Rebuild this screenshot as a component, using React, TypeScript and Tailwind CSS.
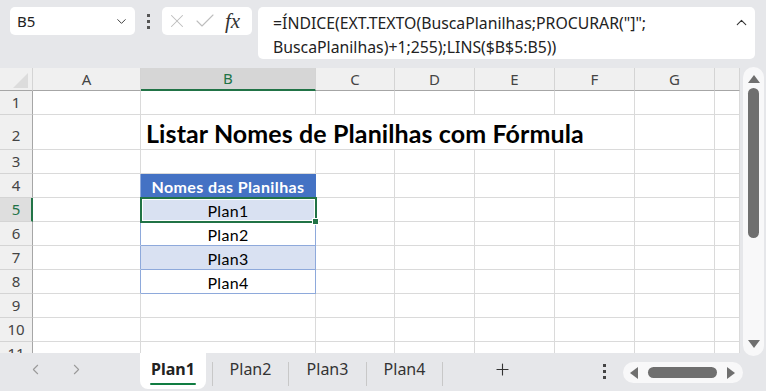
import React from 'react';
import { ChevronDown, ChevronUp, ChevronLeft, ChevronRight, Plus, X, Check } from 'lucide-react';

const cols = [
  { key: 'A', w: 'w-[108px]' },
  { key: 'B', w: 'w-[175px]' },
  { key: 'C', w: 'w-[79px]' },
  { key: 'D', w: 'w-[80px]' },
  { key: 'E', w: 'w-[80px]' },
  { key: 'F', w: 'w-[80px]' },
  { key: 'G', w: 'w-[80px]' },
  { key: '', w: 'w-[25px]' },
];

const rows = [1, 2, 3, 4, 5, 6, 7, 8, 9, 10, 11];

const sheetNames: Record<number, string> = { 5: 'Plan1', 6: 'Plan2', 7: 'Plan3', 8: 'Plan4' };

function Cell({ r, c }: { r: number; c: number }) {
  const w = cols[c].w;
  let border = 'border-b border-b-[#dadada] border-r border-r-[#dadada]';
  let fill = '';
  let content: React.ReactNode = null;

  // titulo transborda sobre C..E, sem linhas verticais
  if (r === 2 && c >= 1 && c <= 4) border = 'border-b border-b-[#dadada]';
  if (r === 2 && c === 1) {
    content = (
      <div className="whitespace-nowrap pl-[5px] pb-[1px] font-[Lato,sans-serif] font-bold text-[25px] leading-[30px] tracking-[0.1px] text-black">
        Listar Nomes de Planilhas com Fórmula
      </div>
    );
  }

  if (c === 0 && r >= 4 && r <= 8) border = 'border-b border-b-[#dadada] border-r border-r-[#8ea9db]';

  if (c === 1 && r === 4) {
    border = 'border-b border-b-[#8ea9db] border-r border-r-[#4472c4]';
    fill = 'bg-[#4472c4]';
    content = (
      <div className="w-full text-center font-[Lato,sans-serif] font-bold text-[16px] tracking-[0.4px] text-white pt-[2px]">
        Nomes das Planilhas
      </div>
    );
  }
  if (c === 1 && r >= 5 && r <= 8) {
    border = 'border-b border-b-[#8ea9db] border-r border-r-[#8ea9db]';
    fill = r % 2 === 1 ? 'bg-[#d9e1f2]' : 'bg-white';
    content = (
      <div className="w-full text-center font-[Lato,sans-serif] text-[16px] tracking-[0.3px] text-black pt-[2px]">
        {sheetNames[r]}
      </div>
    );
  }

  return (
    <div className={`${w} shrink-0 h-full flex ${r === 2 ? 'items-end' : 'items-center'} ${border} ${fill}`}>
      {content}
    </div>
  );
}

function Grid() {
  return (
    <div className="w-[740px] h-full bg-white overflow-hidden relative">
      {/* cabecalho de colunas */}
      <div className="flex h-[23px]">
        <div className="w-[33px] shrink-0 bg-[#f0f0f0] border-r border-r-[#d4d4d4] border-b border-b-[#a6a6a6] flex items-end justify-end pr-[4px] pb-[2px]">
          <svg width="15" height="15" viewBox="0 0 15 15">
            <polygon points="15,0 15,15 0,15" fill="#dcdcdc" />
          </svg>
        </div>
        {cols.map((col) =>
          col.key === 'B' ? (
            <div
              key="B"
              className={`${col.w} shrink-0 bg-[#d6d6d6] border-r border-r-[#d4d4d4] border-b-2 border-b-[#217346] flex items-center justify-center text-[15px] text-[#217346]`}
            >
              B
            </div>
          ) : (
            <div
              key={col.key || 'x'}
              className={`${col.w} shrink-0 bg-[#f0f0f0] border-r border-r-[#d4d4d4] border-b border-b-[#a6a6a6] flex items-center justify-center text-[15px] text-[#444]`}
            >
              {col.key}
            </div>
          )
        )}
      </div>

      {rows.map((r) => (
        <div key={r} className={`flex ${r === 2 ? 'h-[35px]' : 'h-[24px]'}`}>
          {r === 5 ? (
            <div className="w-[33px] shrink-0 bg-[#dedede] border-r-2 border-r-[#217346] border-b border-b-[#d4d4d4] flex items-center justify-center text-[15px] text-[#217346] pl-[1px]">
              5
            </div>
          ) : (
            <div className={`w-[33px] shrink-0 bg-[#f0f0f0] border-r border-r-[#a6a6a6] border-b border-b-[#d4d4d4] flex justify-center text-[15px] text-[#444] ${r === 2 ? 'items-end pb-[3px]' : 'items-center'}`}>
              {r}
            </div>
          )}
          {cols.map((_, c) => (
            <Cell key={c} r={r} c={c} />
          ))}
        </div>
      ))}

      {/* selecao B5 */}
      <div className="absolute left-[140px] top-[129px] w-[177px] h-[26px] border-2 border-[#217346] shadow-[inset_0_0_0_1px_white] pointer-events-none" />
      <div className="absolute left-[313px] top-[151px] w-[5px] h-[5px] bg-[#217346] outline outline-1 outline-white" />
    </div>
  );
}

function VScroll() {
  return (
    <div className="ml-[3px] -mt-[1px] w-[21px] h-[289px] rounded-[11px] bg-[#f8f8f9] flex flex-col items-center pt-[8px] relative z-10">
      <svg width="12" height="8" viewBox="0 0 12 8">
        <polygon points="6,0 12,8 0,8" fill="#6f6f6f" />
      </svg>
      <div className="mt-[5px] w-[11px] h-[150px] rounded-full bg-[#6f6f6f]" />
      <div className="flex-1" />
      <svg width="12" height="8" viewBox="0 0 12 8" className="mb-[8px]">
        <polygon points="0,0 12,0 6,8" fill="#6f6f6f" />
      </svg>
    </div>
  );
}

function TopBar() {
  return (
    <div className="h-[68px] shrink-0 flex items-start pt-[7px] pl-[10px]">
      <div className="w-[125px] h-[28px] bg-white rounded-[5px] flex items-center justify-between pl-[7px] pr-[6px] text-[15px] text-[#222]">
        <span>B5</span>
        <ChevronDown size={15} strokeWidth={1.5} color="#333" />
      </div>
      <div className="w-[27px] h-[28px] flex flex-col items-center justify-center gap-[3px]">
        <div className="w-[3px] h-[3px] bg-[#555]" />
        <div className="w-[3px] h-[3px] bg-[#555]" />
        <div className="w-[3px] h-[3px] bg-[#555]" />
      </div>
      <div className="w-[90px] h-[28px] bg-white rounded-[5px] flex items-center pl-[4px]">
        <X size={22} strokeWidth={1.1} color="#bdbdbd" />
        <Check size={24} strokeWidth={1.1} color="#bdbdbd" className="ml-[5px]" />
        <span className="ml-[8px] font-['Liberation_Serif',serif] italic text-[21px] text-[#333] leading-none">fx</span>
      </div>
      <div className="ml-[6px] w-[497px] h-[52px] bg-white rounded-[5px] flex justify-between pl-[15px] pr-[5px] pt-[4px]">
        <div className="text-[15.8px] leading-[24px] text-[#222]">
          =ÍNDICE(EXT.TEXTO(BuscaPlanilhas;PROCURAR("]";
          <br />
          BuscaPlanilhas)+1;255);LINS($B$5:B5))
        </div>
        <ChevronUp size={17} strokeWidth={1.5} color="#333" className="mt-[3px]" />
      </div>
    </div>
  );
}

function Separator() {
  return <div className="w-px h-[24px] mt-[9px] bg-[#c8c8c8] shrink-0" />;
}

function BottomBar() {
  return (
    <div className="h-[38px] shrink-0 flex items-start text-[16px] text-[#333]">
      <div className="w-[140px] h-[32px] flex items-center pl-[27px] gap-[24px] text-[#9a9a9a]">
        <ChevronLeft size={17} strokeWidth={1.5} />
        <ChevronRight size={17} strokeWidth={1.5} />
      </div>
      <div className="w-[66px] h-[36px] bg-white rounded-b-[8px] flex flex-col items-center pt-[4px] shrink-0">
        <span className="font-bold text-[#222] leading-[24px]">Plan1</span>
        <div className="mt-[2px] w-[46px] h-[2px] rounded-full bg-[#107c41]" />
      </div>
      <div className="w-[6px]" />
      <Separator />
      <div className="w-[75px] h-[32px] flex items-center justify-center">Plan2</div>
      <Separator />
      <div className="w-[77px] h-[32px] flex items-center justify-center">Plan3</div>
      <Separator />
      <div className="w-[75px] h-[32px] flex items-center justify-center">Plan4</div>
      <Separator />
      <div className="w-[119px] h-[32px] flex items-center justify-center">
        <Plus size={19} strokeWidth={1.4} color="#333" />
      </div>
      <div className="w-[61px] h-[36px] flex flex-col items-center justify-center gap-[3px] pl-[23px]">
        <div className="w-[3px] h-[3px] bg-[#444]" />
        <div className="w-[3px] h-[3px] bg-[#444]" />
        <div className="w-[3px] h-[3px] bg-[#444]" />
      </div>
      <div className="mt-[9px] w-[120px] h-[21px] rounded-full bg-[#f8f8f9] flex items-center pl-[7px] pr-[8px] justify-between">
        <svg width="8" height="12" viewBox="0 0 8 12">
          <polygon points="0,6 8,0 8,12" fill="#6f6f6f" />
        </svg>
        <div className="w-[69px] h-[11px] rounded-full bg-[#6f6f6f]" />
        <svg width="8" height="12" viewBox="0 0 8 12">
          <polygon points="0,0 8,6 0,12" fill="#6f6f6f" />
        </svg>
      </div>
    </div>
  );
}

export default function App() {
  return (
    <div className="w-[766px] h-[391px] bg-[#e6e7ea] overflow-hidden flex flex-col font-['Noto_Sans',sans-serif]">
      <TopBar />
      <div className="flex h-[285px] shrink-0">
        <Grid />
        <VScroll />
      </div>
      <BottomBar />
    </div>
  );
}
